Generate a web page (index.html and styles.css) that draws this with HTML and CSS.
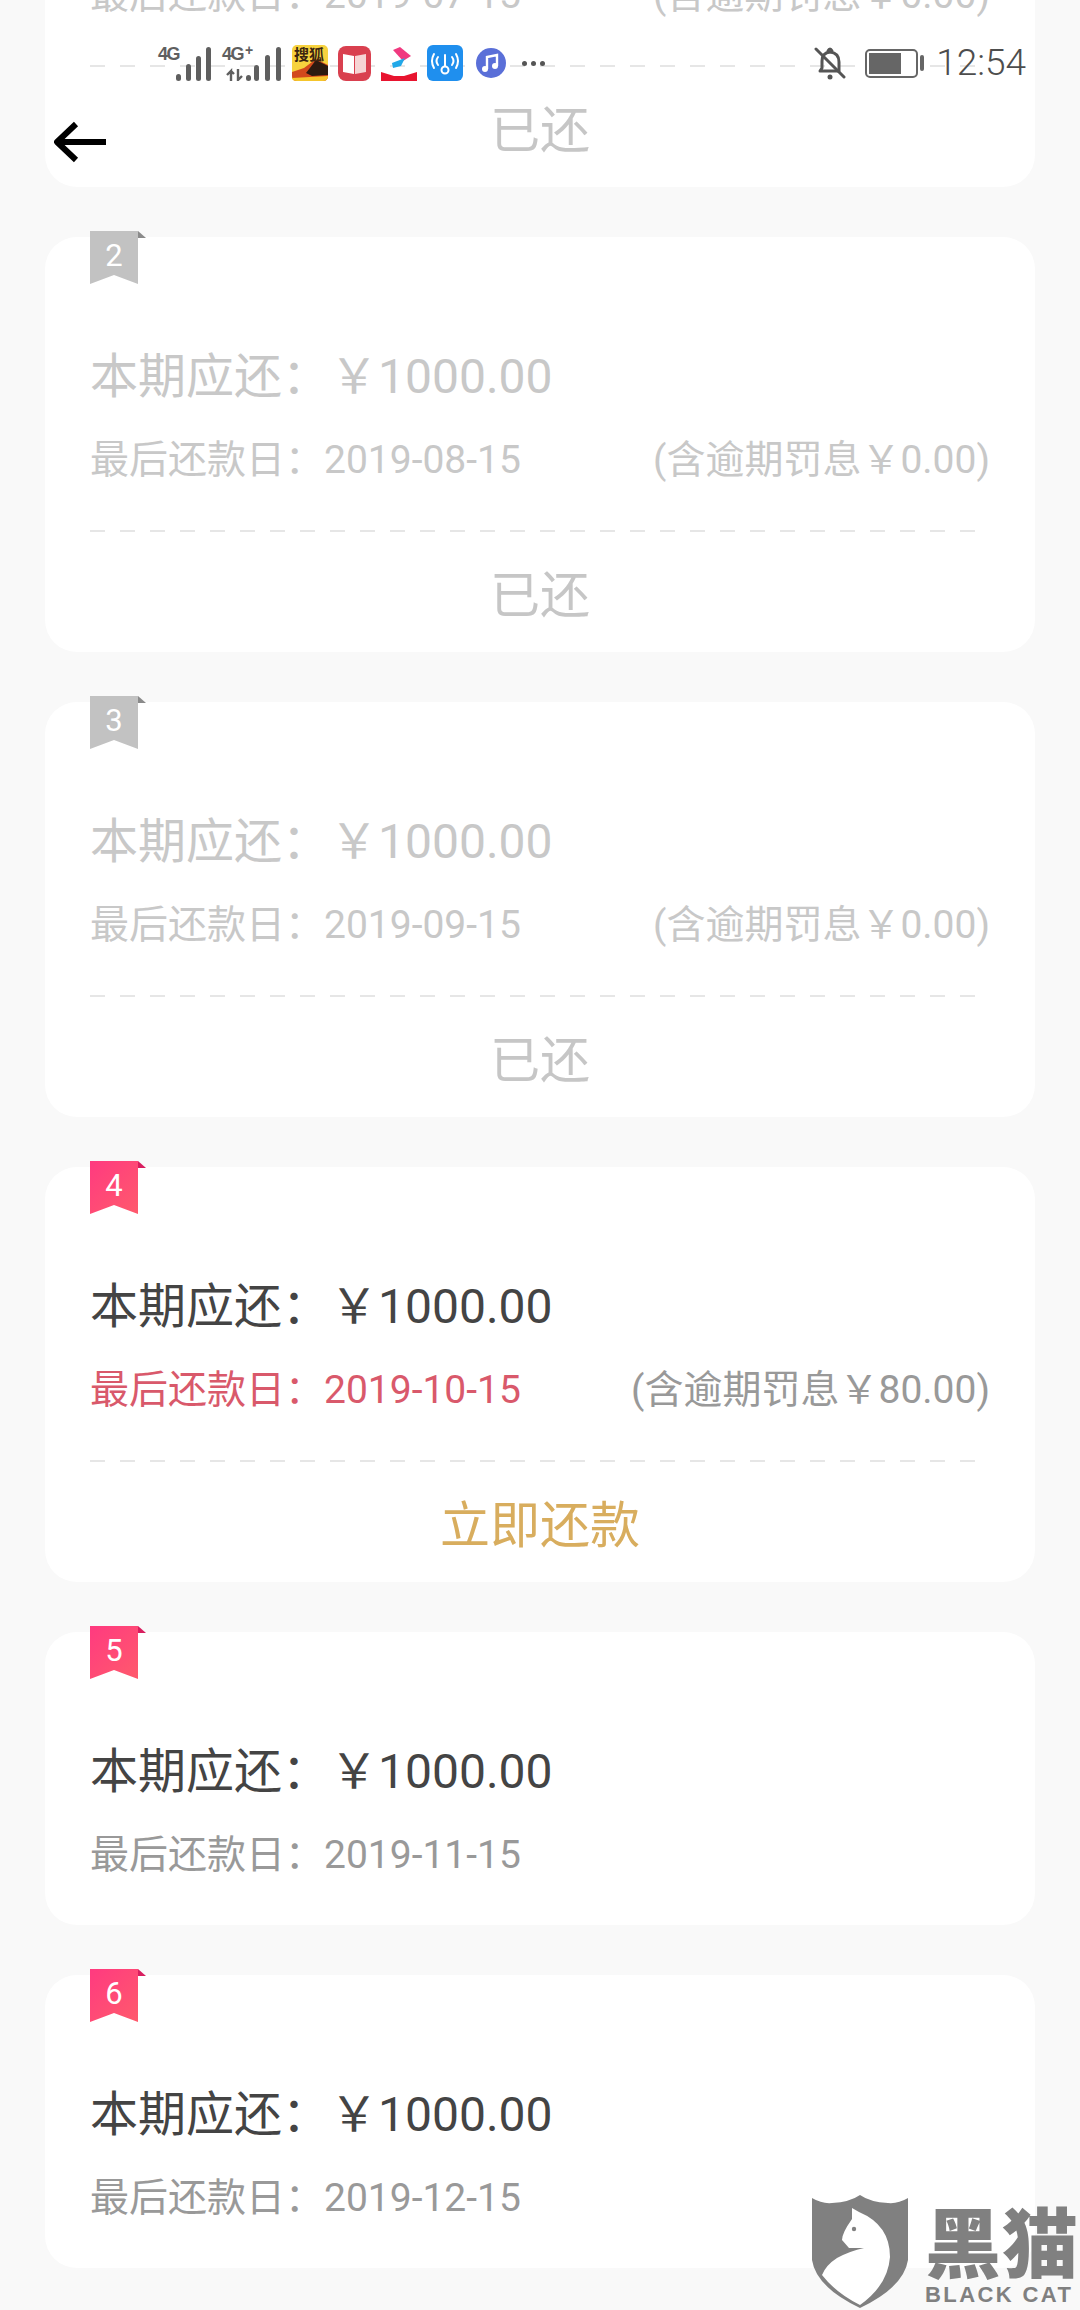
FILE: index.html
```html
<!DOCTYPE html>
<html lang="zh-CN">
<head>
    <meta charset="UTF-8">
    <meta name="viewport" content="width=device-width, initial-scale=1.0">
    <title>还款计划</title>
    <link rel="stylesheet" href="styles.css">
</head>
<body>
    <!-- Status bar, lies over the scrolled list -->
    <div class="status-bar">
        <div class="status-left">
            <div class="signal">
                <span class="net">4G</span>
                <svg width="53" height="34" viewBox="0 0 53 34"><g fill="#5f5f5f"><rect x="18" y="27" width="5" height="7" rx="2.5"/><rect x="28" y="17" width="5" height="17" rx="2.5"/><rect x="38" y="9" width="5" height="25" rx="2.5"/><rect x="48" y="0" width="5" height="34" rx="2.5"/></g></svg>
            </div>
            <div class="signal">
                <span class="net">4G<sup>+</sup></span>
                <svg width="59" height="34" viewBox="0 0 59 34"><g fill="#5f5f5f"><path d="M9 34 L9 24 L5 28 M9 24 L12 27" fill="none" stroke="#5f5f5f" stroke-width="2.4"/><path d="M16 22 L16 33 L20 29" fill="none" stroke="#5f5f5f" stroke-width="2.4"/><rect x="24" y="28" width="5" height="6" rx="2.5"/><rect x="32" y="18" width="5" height="16" rx="2.5"/><rect x="43" y="8" width="5" height="26" rx="2.5"/><rect x="54" y="0" width="5" height="34" rx="2.5"/></g></svg>
            </div>
            <!-- app notification icons -->
            <svg class="app" width="36" height="36" viewBox="0 0 36 36">
                <rect width="36" height="36" rx="5" fill="#f7d23e"/>
                <path d="M0 27 L12 23 L24 14 L36 20 L36 31 Q36 36 31 36 L5 36 Q0 36 0 31Z" fill="#d2491c"/>
                <path d="M14 28 L24 15 L36 21 L36 30 L20 31Z" fill="#2b1a10"/>
                <path d="M0 33 L36 31 L36 31 Q36 36 31 36 L5 36 Q0 36 0 33Z" fill="#f5c52c"/>
                <text x="2" y="15" class="app-text">搜狐</text>
            </svg>
            <svg class="app" width="33" height="35" viewBox="0 0 33 35">
                <rect width="33" height="35" rx="8" fill="#d9404f"/>
                <path d="M5 8 L16 10 L16 28 L5 26Z" fill="#fff"/>
                <path d="M17 10 L28 8 L28 26 L17 28Z" fill="#f6d4d4"/>
            </svg>
            <svg class="app" width="36" height="36" viewBox="0 0 36 36">
                <path d="M12 5 L19 2 L30 11 L22 16Z" fill="#f0397f"/>
                <path d="M11 18 L24 13 L20 21 L12 23Z" fill="#21a8e8"/>
                <path d="M0 27 L13 31 L23 31 L36 27 L36 36 L0 36Z" fill="#e8142f"/>
            </svg>
            <svg class="app" width="36" height="36" viewBox="0 0 36 36">
                <rect width="36" height="36" rx="6" fill="#1f8fee"/>
                <g fill="none" stroke="#fff" stroke-width="2" stroke-linecap="round">
                    <circle cx="18" cy="25" r="3.5"/>
                    <path d="M18 21 L18 10"/>
                    <path d="M11 12 Q8 16 11 20"/>
                    <path d="M7 9 Q3 16 7 23"/>
                    <path d="M25 12 Q28 16 25 20"/>
                    <path d="M29 9 Q33 16 29 23"/>
                </g>
            </svg>
            <svg class="app" width="36" height="36" viewBox="0 0 36 36">
                <circle cx="18" cy="18" r="15" fill="#5a6fd8"/>
                <path d="M14 24 L14 12 L24 10 L24 21" fill="none" stroke="#fff" stroke-width="2.4"/>
                <circle cx="12" cy="24" r="3" fill="#fff"/>
                <circle cx="22" cy="21" r="3" fill="#fff"/>
            </svg>
            <div class="more"><i></i><i></i><i></i></div>
        </div>
        <div class="status-right">
            <svg width="32" height="34" viewBox="0 0 32 34">
                <g fill="none" stroke="#555" stroke-width="3" stroke-linecap="round" stroke-linejoin="round">
                    <path d="M6 25 L8 22 L8 15 Q8 7 16 6 Q25 7 25 16 L25 25 L6 25Z"/>
                    <path d="M14 5 Q16 1 18 5"/>
                    <path d="M2 3 L30 31"/>
                </g>
                <circle cx="16" cy="31" r="2.5" fill="#555"/>
            </svg>
            <div class="battery">
                <div class="battery-body"><div class="battery-level"></div></div>
                <div class="battery-tip"></div>
            </div>
            <span class="time">12:54</span>
        </div>
    </div>

    <a class="back" href="#">
        <svg width="54" height="42" viewBox="0 0 54 42"><path d="M3 21 L52 21 M22 3 L3 21 L22 39" fill="none" stroke="#000" stroke-width="6" stroke-linejoin="round"/></svg>
    </a>

    <div class="list">
        <div class="card paid">
            <div class="ribbon"><span>1</span></div>
            <div class="amount">本期应还&#xFF1A;&#xFFE5;1000.00</div>
            <div class="info">
                <span>最后还款日&#xFF1A;2019-07-15</span>
                <span class="fine">(含逾期罚息&#xFFE5;0.00)</span>
            </div>
            <div class="action">已还</div>
        </div>

        <div class="card paid">
            <div class="ribbon"><span>2</span></div>
            <div class="amount">本期应还&#xFF1A;&#xFFE5;1000.00</div>
            <div class="info">
                <span>最后还款日&#xFF1A;2019-08-15</span>
                <span class="fine">(含逾期罚息&#xFFE5;0.00)</span>
            </div>
            <div class="action">已还</div>
        </div>

        <div class="card paid">
            <div class="ribbon"><span>3</span></div>
            <div class="amount">本期应还&#xFF1A;&#xFFE5;1000.00</div>
            <div class="info">
                <span>最后还款日&#xFF1A;2019-09-15</span>
                <span class="fine">(含逾期罚息&#xFFE5;0.00)</span>
            </div>
            <div class="action">已还</div>
        </div>

        <div class="card">
            <div class="ribbon"><span>4</span></div>
            <div class="amount">本期应还&#xFF1A;&#xFFE5;1000.00</div>
            <div class="info">
                <span class="due">最后还款日&#xFF1A;2019-10-15</span>
                <span class="fine">(含逾期罚息&#xFFE5;80.00)</span>
            </div>
            <div class="action pay">立即还款</div>
        </div>

        <div class="card">
            <div class="ribbon"><span>5</span></div>
            <div class="amount">本期应还&#xFF1A;&#xFFE5;1000.00</div>
            <div class="info">
                <span>最后还款日&#xFF1A;2019-11-15</span>
            </div>
        </div>

        <div class="card">
            <div class="ribbon"><span>6</span></div>
            <div class="amount">本期应还&#xFF1A;&#xFFE5;1000.00</div>
            <div class="info">
                <span>最后还款日&#xFF1A;2019-12-15</span>
            </div>
        </div>
    </div>

    <!-- Watermark -->
    <div class="watermark">
        <svg width="97" height="114" viewBox="0 0 97 114">
            <path d="M0 3 Q10 9 20 8 Q38 7 48 0 Q58 7 76 8 Q86 9 96 3 L96 65 Q92 92 48 113 Q4 92 0 65Z" fill="#808080"/>
            <path d="M40 13 L47 17 Q78 30 78 62 Q76 90 48 110 Q24 98 10 80 Q14 70 25 63 Q38 56 52 53 L37 53 L30 45 Q30 38 40 24Z" fill="#fff"/>
            <circle cx="42" cy="34" r="2.2" fill="#808080"/>
        </svg>
        <div class="wm-text">
            <div class="wm-cn">黑猫</div>
            <div class="wm-en">BLACK CAT</div>
        </div>
    </div>
</body>
</html>
```

FILE: styles.css
```css
/* Reset some default styles */
html, body {
    margin: 0;
    padding: 0;
}

body {
    position: relative;
    width: 1080px;
    height: 2310px;
    overflow: hidden;
    background-color: #f9f9f9;
    font-family: Roboto, "Noto Sans CJK SC", sans-serif;
    color: #444;
}

/* Status bar */
.status-bar {
    position: absolute;
    z-index: 2;
    top: 40px;
    left: 158px;
    right: 54px;
    height: 46px;
    display: flex;
    justify-content: space-between;
    align-items: center;
}

.status-left {
    display: flex;
    align-items: center;
    gap: 10px;
}

.signal {
    position: relative;
    display: flex;
    align-items: flex-end;
    height: 36px;
    margin-right: 1px;
}

.net {
    position: absolute;
    top: -1px;
    left: 0;
    font-family: "Liberation Sans", sans-serif;
    font-size: 18px;
    line-height: 20px;
    font-weight: bold;
    letter-spacing: -1.5px;
    color: #5f5f5f;
}

.net sup {
    font-size: 14px;
    line-height: 0;
    vertical-align: 5px;
    margin-left: 2px;
}

.app {
    display: block;
}

.app-text {
    font-family: "Noto Sans CJK SC", sans-serif;
    font-size: 15px;
    font-weight: bold;
    fill: #3a2410;
}

.more {
    display: flex;
    gap: 4px;
    margin-left: 3px;
}

.more i {
    width: 5px;
    height: 5px;
    border-radius: 50%;
    background-color: #555;
}

.status-right {
    display: flex;
    align-items: center;
    gap: 12px;
}

.battery {
    display: flex;
    align-items: center;
    gap: 2px;
    margin-left: 7px;
}

.battery-body {
    width: 53px;
    height: 29px;
    box-sizing: border-box;
    border: 2px solid #666;
    border-radius: 5px;
    padding: 2px;
    background-color: #fff;
}

.battery-level {
    width: 32px;
    height: 100%;
    background-color: #666;
}

.battery-tip {
    width: 4px;
    height: 16px;
    border-radius: 2px;
    background-color: #666;
}

.time {
    font-size: 37px;
    line-height: 46px;
    font-weight: 300;
    color: #4d4d4d;
}

/* Back arrow */
.back {
    position: absolute;
    z-index: 2;
    top: 121px;
    left: 54px;
    display: block;
    line-height: 0;
}

/* Repayment cards, the list is scrolled up a bit */
.list {
    display: flex;
    flex-direction: column;
    gap: 50px;
    margin: -228px 45px 0;
}

.card {
    position: relative;
    background-color: #fff;
    border-radius: 32px;
    padding: 112px 45px 45px;
}

.ribbon {
    position: absolute;
    top: -6px;
    left: 45px;
    width: 48px;
    height: 53px;
    background: linear-gradient(135deg, #ff3a80, #ff5a6c);
    clip-path: polygon(0 0, 100% 0, 100% 100%, 50% 83%, 0 100%);
    text-align: center;
    color: #fff;
    font-size: 31px;
    line-height: 50px;
}

/* small fold next to the ribbon */
.card::before {
    content: "";
    position: absolute;
    top: -6px;
    left: 93px;
    border-left: 8px solid #d81e5f;
    border-top: 7px solid transparent;
}

.amount {
    font-size: 48px;
    line-height: 56px;
    color: #444;
}

.info {
    display: flex;
    justify-content: space-between;
    margin-top: 30px;
    font-size: 39px;
    line-height: 50px;
    color: #999;
}

.fine {
    color: #999;
}

.due {
    color: #d9596b;
}

/* Dashed line on top of the action row */
.action {
    margin-top: 45px;
    margin-bottom: -45px;
    padding: 38px 0 28px;
    background: repeating-linear-gradient(90deg, #e6e6e6 0 15px, transparent 15px 30px) top left / 100% 2px no-repeat;
    text-align: center;
    font-size: 50px;
    line-height: 56px;
    color: #c6c6c6;
}

.pay {
    color: #d8ad5e;
}

/* Paid installments are greyed out */
.paid .amount,
.paid .info,
.paid .fine {
    color: #c8c8c8;
}

.paid .ribbon {
    background: #c2c2c2;
}

.paid::before {
    border-left-color: #8a8a8a;
}

/* Watermark in the corner */
.watermark {
    position: absolute;
    z-index: 2;
    top: 2195px;
    left: 812px;
    display: flex;
    gap: 16px;
    color: #808080;
}

.wm-text {
    width: 152px;
}

.wm-cn {
    font-family: "Noto Sans CJK SC", sans-serif;
    font-size: 76px;
    line-height: 88px;
    font-weight: 900;
    letter-spacing: 1px;
    white-space: nowrap;
}

.wm-en {
    font-family: "Liberation Sans", sans-serif;
    font-size: 22px;
    line-height: 24px;
    font-weight: bold;
    letter-spacing: 2.4px;
    white-space: nowrap;
}
```
